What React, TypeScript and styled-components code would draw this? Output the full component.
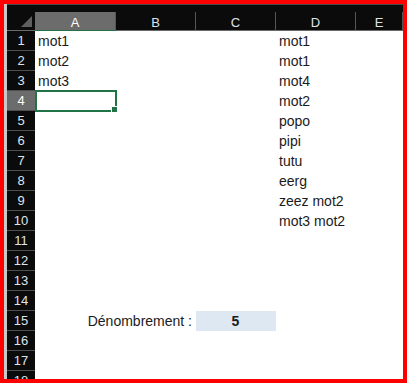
import React from 'react';
import { styled, createGlobalStyle } from 'styled-components';

const GlobalStyle = createGlobalStyle`
  html, body { margin: 0; padding: 0; background: #ffffff; }
  body { font-family: "Liberation Sans", Arial, sans-serif; }
`;

const Frame = styled.div`
  width: 407px;
  height: 383px;
  box-sizing: border-box;
  border: 4px solid #ff0000;
  position: relative;
  overflow: hidden;
  display: flex;
  background: #ffffff;
`;

const Notch = styled.div`
  position: absolute;
  top: -4px;
  left: 184px;
  width: 24px;
  height: 4px;
  background: #151515;
`;

const SideStrip = styled.div`
  width: 3px;
  flex: none;
  background: #c9c9c9;
`;

const Sheet = styled.div`
  flex: 1;
  display: flex;
  flex-direction: column;
`;

const TopBand = styled.div`
  height: 8px;
  flex: none;
  background: #0b0b0b;
  border-top: 1px solid #4a4a4a;
  box-sizing: border-box;
`;

const cols = '28px 81px 80px 80px 80px 1fr';

const HeaderRow = styled.div`
  display: grid;
  grid-template-columns: ${cols};
  height: 19px;
  flex: none;
  background: #0b0b0b;
`;

const Corner = styled.div`
  position: relative;
  border-bottom: 1px solid #6a6a6a;
  box-sizing: border-box;
`;

const CornerTriangle = styled.div`
  position: absolute;
  right: 3px;
  bottom: 3px;
  width: 0;
  height: 0;
  border-left: 11px solid transparent;
  border-bottom: 11px solid #5f5f5f;
`;

const ColHead = styled.div<{ $active?: boolean }>`
  display: flex;
  align-items: center;
  justify-content: center;
  box-sizing: border-box;
  font-size: 13px;
  color: ${p => (p.$active ? '#ffffff' : '#dfe4ec')};
  background: ${p => (p.$active ? '#6c6c6c' : '#0b0b0b')};
  border-bottom: 1px solid ${p => (p.$active ? '#217346' : '#6a6a6a')};
  border-right: 1px solid #565656;
  padding-top: 2px;
`;

const Row = styled.div`
  display: grid;
  grid-template-columns: ${cols};
  height: 20px;
  flex: none;
`;

const RowHead = styled.div<{ $active?: boolean }>`
  display: flex;
  align-items: center;
  justify-content: center;
  box-sizing: border-box;
  font-size: 13px;
  color: ${p => (p.$active ? '#ffffff' : '#dfe4ec')};
  background: ${p => (p.$active ? '#6c6c6c' : '#0b0b0b')};
  border-bottom: 1px solid #4e4e4e;
`;

const Cell = styled.div<{ $align?: string; $fill?: string; $bold?: boolean }>`
  position: relative;
  display: flex;
  align-items: center;
  justify-content: ${p => p.$align || 'flex-start'};
  padding: 0 4px 0 3px;
  font-size: 14px;
  color: #1b1b1b;
  white-space: nowrap;
  background: ${p => p.$fill || 'transparent'};
  font-weight: ${p => (p.$bold ? 700 : 400)};
  overflow: visible;
`;

const Selection = styled.div`
  position: absolute;
  left: 0;
  top: -1px;
  width: 82px;
  height: 22px;
  box-sizing: border-box;
  border: 2px solid #217346;
  pointer-events: none;
`;

const Handle = styled.div`
  position: absolute;
  right: -2px;
  bottom: -2px;
  width: 5px;
  height: 5px;
  background: #217346;
  border: 1px solid #ffffff;
  border-right: none;
  border-bottom: none;
`;

const colA = ['mot1', 'mot2', 'mot3'];
const colD = ['mot1', 'mot1', 'mot4', 'mot2', 'popo', 'pipi', 'tutu', 'eerg', 'zeez mot2', 'mot3 mot2'];

export default function App() {
  const rows = Array.from({ length: 18 }, (_, i) => i + 1);
  return (
    <>
      <GlobalStyle />
      <Frame>
        <Notch />
        <SideStrip />
        <Sheet>
          <TopBand />
          <HeaderRow>
            <Corner>
              <CornerTriangle />
            </Corner>
            <ColHead $active>A</ColHead>
            <ColHead>B</ColHead>
            <ColHead>C</ColHead>
            <ColHead>D</ColHead>
            <ColHead>E</ColHead>
          </HeaderRow>
          {rows.map(r => (
            <Row key={r}>
              <RowHead $active={r === 4}>{r}</RowHead>
              <Cell>
                {colA[r - 1] || ''}
                {r === 4 && (
                  <Selection>
                    <Handle />
                  </Selection>
                )}
              </Cell>
              <Cell $align="flex-end">{r === 15 ? 'Dénombrement :' : ''}</Cell>
              <Cell $align="center" $fill={r === 15 ? '#dde8f3' : undefined} $bold={r === 15}>
                {r === 15 ? '5' : ''}
              </Cell>
              <Cell>{colD[r - 1] || ''}</Cell>
              <Cell />
            </Row>
          ))}
        </Sheet>
      </Frame>
    </>
  );
}
